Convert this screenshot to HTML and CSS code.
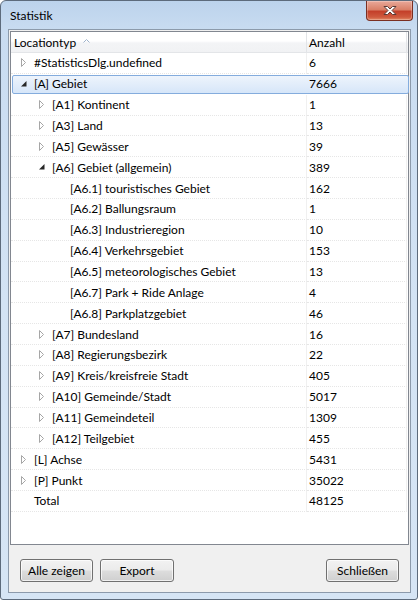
FILE: index.html
```html
<!DOCTYPE html>
<html>
<head>
<meta charset="utf-8">
<link rel="stylesheet" href="styles.css">
</head>
<body>
<div class="window">
  <div class="titlebar">
    <span class="title">Statistik</span>
    <div class="close">
      <svg width="16" height="11" viewBox="0 0 16 11">
        <path d="M2 1.5 H5.5 L8 4 L10.5 1.5 H14 L10 5.5 L14 9.5 H10.5 L8 7 L5.5 9.5 H2 L6 5.5 Z" fill="#ffffff" stroke="#5a3a36" stroke-width="1" stroke-linejoin="round"/>
      </svg>
    </div>
  </div>
  <div class="client">
    <div class="tree">
      <div class="header">
        <div class="hcell hname">Locationtyp
          <svg class="sort" width="7" height="4" viewBox="0 0 7 4"><path d="M0.5 3.5 L3.5 0.5 L6.5 3.5" fill="none" stroke="#9fb3cb" stroke-width="1"/></svg>
        </div>
        <div class="hcell hcount">Anzahl</div>
      </div>
      <div class="rows">
        <div class="row"><div class="name l0"><span class="exp"><svg width="5" height="9" viewBox="0 0 5 9"><path d="M0.5 0.5 L4.5 4.5 L0.5 8.5 Z" fill="#fff" stroke="#a6a6a6"/></svg></span>#StatisticsDlg.undefined</div><div class="count">6</div></div>
        <div class="row selected"><div class="name l0"><span class="exp"><svg width="6" height="6" viewBox="0 0 6 6"><path d="M5.5 0 L5.5 5.5 L0 5.5 Z" fill="#262626"/></svg></span>[A] Gebiet</div><div class="count">7666</div></div>
        <div class="row"><div class="name l1"><span class="exp"><svg width="5" height="9" viewBox="0 0 5 9"><path d="M0.5 0.5 L4.5 4.5 L0.5 8.5 Z" fill="#fff" stroke="#a6a6a6"/></svg></span>[A1] Kontinent</div><div class="count">1</div></div>
        <div class="row"><div class="name l1"><span class="exp"><svg width="5" height="9" viewBox="0 0 5 9"><path d="M0.5 0.5 L4.5 4.5 L0.5 8.5 Z" fill="#fff" stroke="#a6a6a6"/></svg></span>[A3] Land</div><div class="count">13</div></div>
        <div class="row"><div class="name l1"><span class="exp"><svg width="5" height="9" viewBox="0 0 5 9"><path d="M0.5 0.5 L4.5 4.5 L0.5 8.5 Z" fill="#fff" stroke="#a6a6a6"/></svg></span>[A5] Gewässer</div><div class="count">39</div></div>
        <div class="row"><div class="name l1"><span class="exp"><svg width="6" height="6" viewBox="0 0 6 6"><path d="M5.5 0 L5.5 5.5 L0 5.5 Z" fill="#262626"/></svg></span>[A6] Gebiet (allgemein)</div><div class="count">389</div></div>
        <div class="row"><div class="name l2"><span class="exp"></span>[A6.1] touristisches Gebiet</div><div class="count">162</div></div>
        <div class="row"><div class="name l2"><span class="exp"></span>[A6.2] Ballungsraum</div><div class="count">1</div></div>
        <div class="row"><div class="name l2"><span class="exp"></span>[A6.3] Industrieregion</div><div class="count">10</div></div>
        <div class="row"><div class="name l2"><span class="exp"></span>[A6.4] Verkehrsgebiet</div><div class="count">153</div></div>
        <div class="row"><div class="name l2"><span class="exp"></span>[A6.5] meteorologisches Gebiet</div><div class="count">13</div></div>
        <div class="row"><div class="name l2"><span class="exp"></span>[A6.7] Park + Ride Anlage</div><div class="count">4</div></div>
        <div class="row"><div class="name l2"><span class="exp"></span>[A6.8] Parkplatzgebiet</div><div class="count">46</div></div>
        <div class="row"><div class="name l1"><span class="exp"><svg width="5" height="9" viewBox="0 0 5 9"><path d="M0.5 0.5 L4.5 4.5 L0.5 8.5 Z" fill="#fff" stroke="#a6a6a6"/></svg></span>[A7] Bundesland</div><div class="count">16</div></div>
        <div class="row"><div class="name l1"><span class="exp"><svg width="5" height="9" viewBox="0 0 5 9"><path d="M0.5 0.5 L4.5 4.5 L0.5 8.5 Z" fill="#fff" stroke="#a6a6a6"/></svg></span>[A8] Regierungsbezirk</div><div class="count">22</div></div>
        <div class="row"><div class="name l1"><span class="exp"><svg width="5" height="9" viewBox="0 0 5 9"><path d="M0.5 0.5 L4.5 4.5 L0.5 8.5 Z" fill="#fff" stroke="#a6a6a6"/></svg></span>[A9] Kreis/kreisfreie Stadt</div><div class="count">405</div></div>
        <div class="row"><div class="name l1"><span class="exp"><svg width="5" height="9" viewBox="0 0 5 9"><path d="M0.5 0.5 L4.5 4.5 L0.5 8.5 Z" fill="#fff" stroke="#a6a6a6"/></svg></span>[A10] Gemeinde/Stadt</div><div class="count">5017</div></div>
        <div class="row"><div class="name l1"><span class="exp"><svg width="5" height="9" viewBox="0 0 5 9"><path d="M0.5 0.5 L4.5 4.5 L0.5 8.5 Z" fill="#fff" stroke="#a6a6a6"/></svg></span>[A11] Gemeindeteil</div><div class="count">1309</div></div>
        <div class="row"><div class="name l1"><span class="exp"><svg width="5" height="9" viewBox="0 0 5 9"><path d="M0.5 0.5 L4.5 4.5 L0.5 8.5 Z" fill="#fff" stroke="#a6a6a6"/></svg></span>[A12] Teilgebiet</div><div class="count">455</div></div>
        <div class="row"><div class="name l0"><span class="exp"><svg width="5" height="9" viewBox="0 0 5 9"><path d="M0.5 0.5 L4.5 4.5 L0.5 8.5 Z" fill="#fff" stroke="#a6a6a6"/></svg></span>[L] Achse</div><div class="count">5431</div></div>
        <div class="row"><div class="name l0"><span class="exp"><svg width="5" height="9" viewBox="0 0 5 9"><path d="M0.5 0.5 L4.5 4.5 L0.5 8.5 Z" fill="#fff" stroke="#a6a6a6"/></svg></span>[P] Punkt</div><div class="count">35022</div></div>
        <div class="row"><div class="name l0"><span class="exp"></span>Total</div><div class="count">48125</div></div>
      </div>
    </div>
    <div class="buttons">
      <button class="btn b1">Alle zeigen</button>
      <button class="btn b2">Export</button>
      <span class="spacer"></span>
      <button class="btn b3">Schließen</button>
    </div>
  </div>
</div>
</body>
</html>
```
FILE: styles.css
```css
html, body {
  margin: 0;
  padding: 0;
  background: #ffffff;
}
body {
  font-family: Lato, "Open Sans", sans-serif;
  font-size: 12px;
  color: #000;
}
.window {
  width: 418px;
  height: 600px;
  box-sizing: border-box;
  border: 1px solid #5d6b7c;
  border-radius: 6px 6px 3px 3px;
  background: linear-gradient(to bottom, #bcd3ec 0px, #c9dcf1 30px, #d3e3f4 300px, #d6e5f5 600px);
  padding: 0 6px 6px 7px;
  display: flex;
  flex-direction: column;
}
.titlebar {
  height: 28px;
  display: flex;
  align-items: flex-start;
  position: relative;
}
.title {
  margin-left: 2px;
  margin-top: 7px;
  font-size: 12px;
  color: #000;
}
.close {
  position: absolute;
  right: -2px;
  top: 0;
  width: 47px;
  height: 20px;
  box-sizing: border-box;
  border: 1px solid #7a2f22;
  border-top: none;
  border-radius: 0 0 4px 4px;
  background: linear-gradient(to bottom, #e9a99a 0%, #d98068 45%, #c4402a 55%, #cf5a3e 85%, #e28b66 100%);
  display: flex;
  align-items: center;
  justify-content: center;
  box-shadow: inset 0 0 0 1px rgba(255,255,255,0.25);
}
.client {
  flex: 1;
  border: 1px solid #8c9aab;
  background: #f0f0f0;
  padding: 1px 1px 0 1px;
  display: flex;
  flex-direction: column;
}
.tree {
  height: 514px;
  box-sizing: border-box;
  border: 1px solid #828790;
  background: #fff;
}
.header {
  display: grid;
  grid-template-columns: 296px 100px;
  height: 21px;
  box-sizing: border-box;
  border-bottom: 1px solid #e3e5e8;
  background: linear-gradient(to bottom, #ffffff 0%, #ffffff 45%, #f3f4f6 55%, #f1f2f4 100%);
}
.hcell {
  display: flex;
  align-items: center;
  padding-left: 3px;
  border-right: 1px solid #e2e4e7;
  color: #000;
}
.hcount {
  padding-left: 2px;
}
.sort {
  margin-left: 7px;
  margin-top: -2px;
}
.row {
  display: grid;
  grid-template-columns: 296px 100px;
  height: 20.86px;
  box-sizing: border-box;
}
.name, .count {
  display: flex;
  align-items: center;
  border-bottom: 1px dotted #e6e6e6;
  white-space: nowrap;
  color: #000;
}
.name {
  border-right: 1px solid #f0f0f0;
}
.count {
  padding-left: 2px;
  border-right: 1px solid #f0f0f0;
}
.l0 { padding-left: 0; }
.l1 { padding-left: 18px; }
.l2 { padding-left: 36px; }
.exp {
  width: 23px;
  flex: none;
  display: flex;
  align-items: center;
  padding-left: 10px;
  box-sizing: border-box;
}
.row.selected {
  position: relative;
}
.row.selected::before {
  content: "";
  position: absolute;
  left: 1px;
  right: -1px;
  top: 1px;
  bottom: 1px;
  border: 1px solid #84acdd;
  border-radius: 2px;
  background: linear-gradient(to bottom, #eef4fc, #d6e6f9);
}
.row.selected .name, .row.selected .count {
  position: relative;
  border-color: transparent;
}
.buttons {
  display: flex;
  padding: 14px 10px 0 10px;
  gap: 7px;
}
.spacer {
  flex: 1;
}
.btn {
  height: 23px;
  font-family: Lato, "Open Sans", sans-serif;
  font-size: 12px;
  color: #000;
  border: 1px solid #707070;
  border-radius: 3px;
  background: linear-gradient(to bottom, #f2f2f2 0%, #ebebeb 48%, #dddddd 52%, #cfcfcf 100%);
  box-shadow: inset 0 0 0 1px rgba(255,255,255,0.7);
  padding: 0;
}
.b1 { width: 73px; }
.b2 { width: 74px; }
.b3 { width: 73px; }
```
